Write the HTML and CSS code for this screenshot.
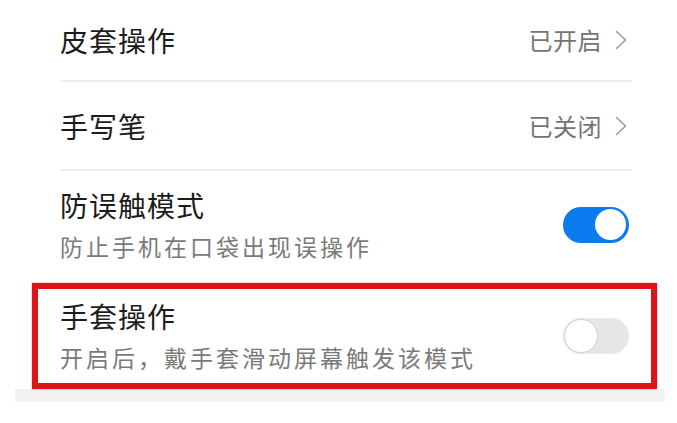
FILE: index.html
```html
<!DOCTYPE html>
<html lang="zh-CN">
<head>
<meta charset="utf-8">
<title>设置</title>
<link rel="stylesheet" href="styles.css">
</head>
<body>
<div class="page">
  <div class="list">
    <div class="row row-nav">
      <span class="title">皮套操作</span>
      <span class="value">已开启</span>
      <svg class="chev" width="12" height="20" viewBox="0 0 12 20"><polyline points="1.5,1.5 10.5,10 1.5,18.5" fill="none" stroke="#9b9b9b" stroke-width="1.6" stroke-linecap="round" stroke-linejoin="round"/></svg>
    </div>
    <div class="divider"></div>
    <div class="row row-nav row-2">
      <span class="title">手写笔</span>
      <span class="value">已关闭</span>
      <svg class="chev" width="12" height="20" viewBox="0 0 12 20"><polyline points="1.5,1.5 10.5,10 1.5,18.5" fill="none" stroke="#9b9b9b" stroke-width="1.6" stroke-linecap="round" stroke-linejoin="round"/></svg>
    </div>
    <div class="divider"></div>
    <div class="row row-switch row-3">
      <div class="texts">
        <div class="title">防误触模式</div>
        <div class="sub">防止手机在口袋出现误操作</div>
      </div>
      <div class="switch on"><span class="knob"></span></div>
    </div>
    <div class="row row-switch row-4">
      <div class="texts">
        <div class="title">手套操作</div>
        <div class="sub">开启后，戴手套滑动屏幕触发该模式</div>
      </div>
      <div class="switch off"><span class="knob"></span></div>
      <div class="highlight"></div>
    </div>
  </div>
  <div class="band"></div>
</div>
</body>
</html>
```
FILE: styles.css
```css
html, body {
  margin: 0;
  padding: 0;
  background: #ffffff;
}
body {
  width: 677px;
  height: 423px;
  overflow: hidden;
  font-family: "Noto Sans CJK SC", "Noto Sans", sans-serif;
}
.page {
  display: flex;
  flex-direction: column;
}
.list {
  padding: 0 45px 0 60px;
  display: flex;
  flex-direction: column;
}
.row {
  display: flex;
  align-items: center;
}
.row-nav {
  height: 80px;
}
.row-2 {
  height: 87px;
}
.title {
  font-size: 28px;
  line-height: 38px;
  letter-spacing: 1px;
  color: #1c1c1c;
  flex: 1;
}
.value {
  font-size: 24px;
  letter-spacing: 0.5px;
  line-height: 30px;
  color: #747474;
}
.chev {
  margin-left: 13px;
  margin-right: 5px;
}
.divider {
  height: 2px;
  background: #eeeeee;
}
.row-switch {
  justify-content: space-between;
}
.row-3 {
  padding: 15px 0 14px;
}
.row-4 {
  position: relative;
  padding: 20px 0 15px;
}
.texts {
  display: flex;
  flex-direction: column;
}
.sub {
  margin-top: 5px;
  font-size: 23px;
  line-height: 34px;
  letter-spacing: 3px;
  color: #7a7a7a;
}
.switch {
  width: 66px;
  height: 36px;
  border-radius: 18px;
  margin-right: 3px;
  display: flex;
  align-items: center;
  box-sizing: border-box;
}
.switch.on {
  background: #0b7bef;
  justify-content: flex-end;
  padding-right: 3px;
}
.switch.on .knob {
  width: 31px;
  height: 31px;
  border-radius: 50%;
  background: #ffffff;
}
.switch.off {
  background: #e6e6e6;
  justify-content: flex-start;
}
.switch.off .knob {
  width: 34px;
  height: 34px;
  border-radius: 50%;
  background: #ffffff;
  border: 1px solid #d3d3d3;
  box-sizing: border-box;
  margin-left: 1px;
}
.highlight {
  position: absolute;
  left: -28px;
  right: -25px;
  top: 6px;
  bottom: 0;
  border: 6px solid #de1418;
  box-shadow: 0 0 1.5px rgba(222, 20, 24, 0.5);
  pointer-events: none;
}
.band {
  height: 13px;
  margin: 0 12px 0 15px;
  background: #f1f1f1;
}
```
